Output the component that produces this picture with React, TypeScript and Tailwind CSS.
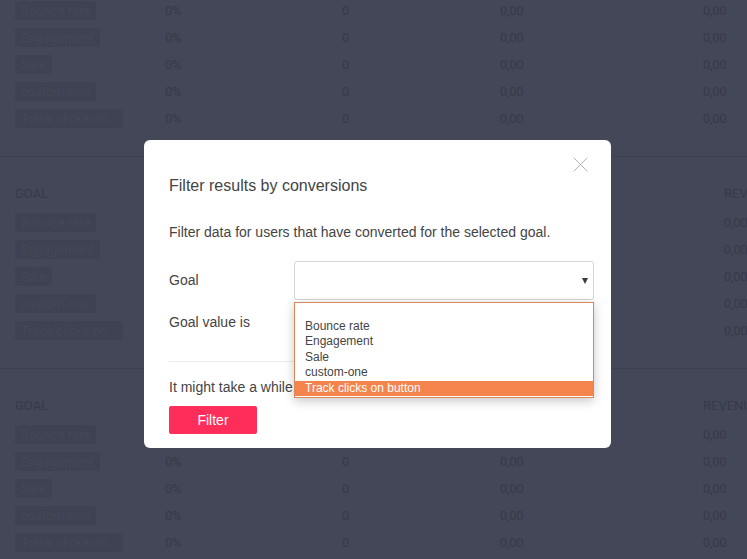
const goals = ['Bounce rate', 'Engagement', 'Sale', 'custom-one', 'Track clicks on...']

function Row({ label, lastCol }: { label: string; lastCol: string }) {
  return (
    <div className="flex h-[19px] items-center text-[12.5px] text-[#363a4b]">
      <div className="w-[150px] shrink-0">
        <span className="inline-block h-[19px] rounded-[2px] bg-[#3e4252] px-[6px] text-[13px] leading-[19px] text-[#444858]">
          {label}
        </span>
      </div>
      <div className="w-[177px] shrink-0 pt-[2px]">0%</div>
      <div className="w-[158px] shrink-0 pt-[2px]">0</div>
      <div className={`${lastCol} shrink-0 pt-[2px]`}>0,00</div>
      <div className="shrink-0 pt-[2px]">0,00</div>
    </div>
  )
}

function Section({ header, lastCol, top }: { header: boolean; lastCol: string; top?: boolean }) {
  return (
    <div className={top ? 'pl-[15px] pt-[1px] pb-[28px]' : 'border-t border-[#3c404f] pl-[15px] pt-[27px] pb-[28px]'}>
      {header && (
        <div className="mb-[11px] flex h-[18px] items-center pt-[1px] text-[13px] uppercase text-[#363a4b]">
          <div className="w-[150px] shrink-0">Goal</div>
          <div className="w-[177px] shrink-0"></div>
          <div className="w-[158px] shrink-0"></div>
          <div className={`${lastCol} shrink-0`}></div>
          <div className="shrink-0 whitespace-nowrap">Revenue</div>
        </div>
      )}
      <div className="flex flex-col gap-[8px]">
        {goals.map((g) => (
          <Row key={g} label={g} lastCol={lastCol} />
        ))}
      </div>
    </div>
  )
}

function FilterModal() {
  return (
    <div className="absolute left-[144px] top-[140px] w-[467px] rounded-[6px] bg-white pt-[17px] pb-[14px] font-['Liberation_Sans',Arial,sans-serif] text-[#444]">
      <div className="flex justify-end pr-[23px]">
        <svg width="15" height="15" viewBox="0 0 15 15" className="text-[#b5b5b5]">
          <path d="M0.5 0.5L14.5 14.5M14.5 0.5L0.5 14.5" stroke="currentColor" strokeWidth="1" />
        </svg>
      </div>
      <div className="pl-[25px] pr-[17px]">
        <h2 className="mt-[5px] text-[16px] leading-[18px]">Filter results by conversions</h2>
        <p className="mt-[27px] text-[14px] leading-[20px]">
          Filter data for users that have converted for the selected goal.
        </p>

        <div className="mt-[19px] flex h-[39px] items-center text-[14px]">
          <div className="w-[125px] shrink-0">Goal</div>
          <div className="relative h-[39px] w-[300px] shrink-0">
            <div className="flex h-full items-center justify-end rounded-[3px] border border-[#d6d6d6] pr-[5px]">
              <svg width="6" height="6" viewBox="0 0 6 6">
                <polygon points="0,0 6,0 3,6" fill="#3a3a3a" />
              </svg>
            </div>
            <ul className="absolute left-0 top-[41px] z-10 w-[300px] border border-[#d9875a] bg-white pb-[1px] text-[12px] leading-[15.5px] text-[#444] shadow-[0_3px_10px_rgba(0,0,0,0.22)]">
              <li className="h-[15.5px]"></li>
              <li className="pl-[10px]">Bounce rate</li>
              <li className="pl-[10px]">Engagement</li>
              <li className="pl-[10px]">Sale</li>
              <li className="pl-[10px]">custom-one</li>
              <li className="bg-[#f5844c] pl-[10px] text-white">Track clicks on button</li>
            </ul>
          </div>
        </div>

        <div className="mt-[3px] flex h-[39px] items-center text-[14px]">
          <div className="w-[125px] shrink-0">Goal value is</div>
          <div className="h-[39px] w-[300px] shrink-0 rounded-[3px] border border-[#d6d6d6]"></div>
        </div>

        <div className="mt-[19px] h-px bg-[#ececec]"></div>

        <p className="mt-[15px] text-[14px] leading-[20px]">It might take a while.</p>

        <button className="mt-[9px] h-[28px] w-[88px] rounded-[2px] bg-[#ff2d5a] text-[14px] text-white">
          Filter
        </button>
      </div>
    </div>
  )
}

export default function App() {
  return (
    <div className="relative h-[559px] w-[747px] overflow-hidden bg-[#434757] font-['Roboto',sans-serif]">
      <Section header={false} lastCol="w-[203px]" top />
      <Section header lastCol="w-[224px]" />
      <Section header lastCol="w-[203px]" />
      <FilterModal />
    </div>
  )
}
